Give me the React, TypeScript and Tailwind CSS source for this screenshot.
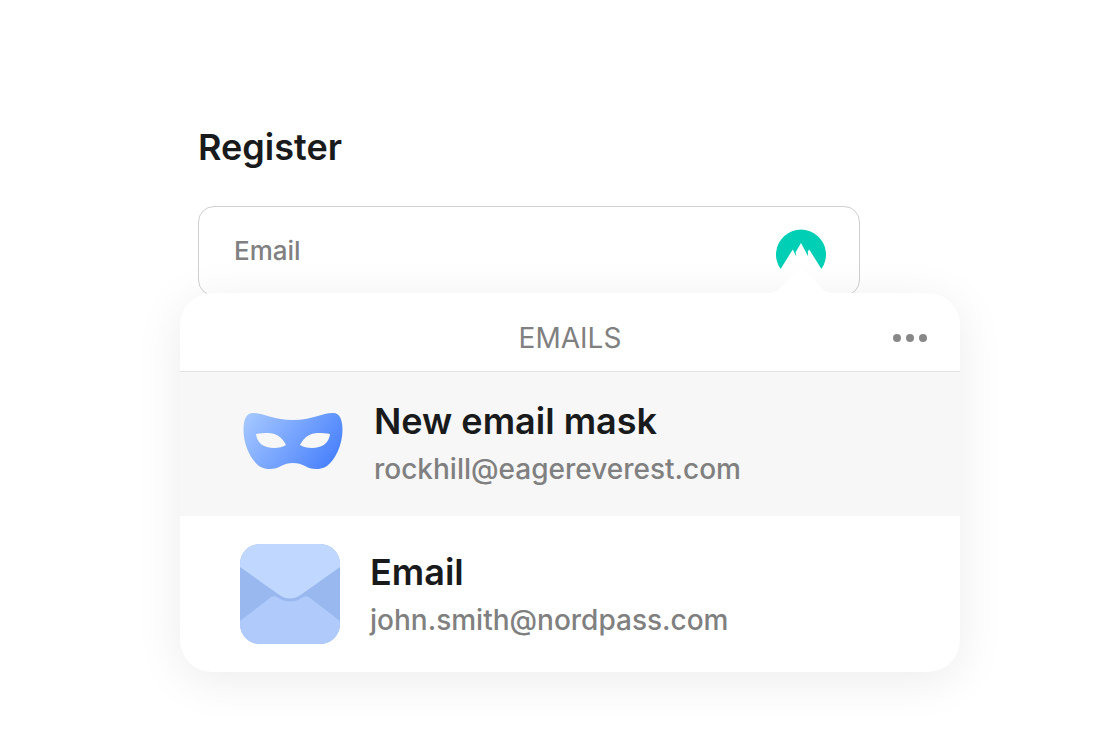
import { useState } from "react";

interface EmailOption {
  id: string;
  title: string;
  address: string;
  icon: React.ReactNode;
}

const NordIcon = () => (
  <svg width="50" height="44" viewBox="0 0 50 44" fill="none" aria-hidden="true">
    <path
      d="M4.6 40A25 25 0 1 1 45.4 40L33.2 20.4L31.8 22.6L32.2 27.6L25 14L19.6 23.2L20.4 27.8L16.800 20.4Z"
      fill="#00CFB6"
    />
  </svg>
);

const MaskIcon = () => (
  <svg width="104" height="60" viewBox="0 2 104 60" fill="none" aria-hidden="true">
    <defs>
      <linearGradient id="mask" x1="6" y1="4" x2="84" y2="62" gradientUnits="userSpaceOnUse">
        <stop stopColor="#A6C8FF" />
        <stop offset="1" stopColor="#4A82FC" />
      </linearGradient>
    </defs>
    <path
      fillRule="evenodd"
      clipRule="evenodd"
      d="M13 2C24 2 34 9 53 9C72 9 82 2 93 2C100 2 102.500 9 102.500 19C102.500 34 95 49 87 55C79 60 70 58 65 55C61 53 58 52 53 52C48 52 45 53 41 55C36 58 27 60 19 55C11 49 3.500 34 3.500 19C3.500 9 6 2 13 2ZM16 23C17 32 24 37 34 37C39 37 43 36 46 34C42 26 36 22 28 22C24 22 20 22 16 23ZM90 23C86 22 82 22 78 22C70 22 64 26 60 34C63 36 67 37 72 37C82 37 89 32 90 23Z"
      fill="url(#mask)"
    />
  </svg>
);

const EnvelopeIcon = () => (
  <svg width="100" height="100" viewBox="0 0 100 100" fill="none" aria-hidden="true">
    <defs>
      <clipPath id="envelope">
        <rect width="100" height="100" rx="20" />
      </clipPath>
    </defs>
    <g clipPath="url(#envelope)">
      <rect width="100" height="100" fill="#98B8EF" />
      <path d="M0 77L30 54Q33 51 37 53C45 59 55 59 63 53Q67 51 70 54L100 77V100H0Z" fill="#B0CBFB" />
      <path d="M0 0H100V23L62 50C54 56 46 56 38 50L0 23Z" fill="#C0D8FF" />
    </g>
  </svg>
);

const options: EmailOption[] = [
  { id: "mask", title: "New email mask", address: "rockhill@eagereverest.com", icon: <MaskIcon /> },
  { id: "email", title: "Email", address: "john.smith@nordpass.com", icon: <EnvelopeIcon /> },
];

export default function App() {
  const [email, setEmail] = useState("");
  const [active, setActive] = useState("mask");

  return (
    <main className="min-h-screen bg-white pt-[125px] pr-[140px] pb-[60px] pl-[180px] font-['Inter',sans-serif]">
      <form className="mr-[100px] ml-[18px]" onSubmit={(e) => e.preventDefault()}>
        <h1 className="text-[36px] leading-[44px] font-semibold text-[#191a1b]">Register</h1>
        <div className="mt-[37px] flex h-[90px] items-center rounded-2xl border border-[#d0d0d0] pr-[33px] pl-[35px]">
          <input
            type="email"
            aria-label="Email"
            placeholder="Email"
            value={email}
            onChange={(e) => setEmail(e.target.value)}
            className="min-w-0 flex-1 bg-transparent text-[26px] leading-[36px] font-[450] text-[#191a1b] outline-none placeholder:text-[#808080]"
          />
          <NordIcon />
        </div>
      </form>

      <section
        aria-label="Emails"
        className="relative -mt-[3px] rounded-[32px] bg-white shadow-[0_8px_48px_rgba(0,0,0,0.08)]"
      >
        <svg
          className="absolute right-[126px] bottom-full"
          width="66"
          height="26"
          viewBox="0 0 66 26"
          fill="#fff"
          aria-hidden="true"
        >
          <path d="M0 26C6 26 9 24 13 20L27 5C31 1 35 1 39 5L53 20C57 24 60 26 66 26Z" />
        </svg>
        <div className="grid h-[79px] grid-cols-[1fr_auto_1fr] items-center border-b border-[#e2e2e2] px-[33px] pt-3">
          <h2 className="col-start-2 text-[28px] leading-[36px] text-[#808080]">EMAILS</h2>
          <button type="button" aria-label="More options" className="flex gap-[5px] justify-self-end">
            <span className="size-2 rounded-full bg-[#888888]" />
            <span className="size-2 rounded-full bg-[#888888]" />
            <span className="size-2 rounded-full bg-[#888888]" />
          </button>
        </div>
        <ul className="overflow-hidden rounded-b-[32px]">
          {options.map((option) => (
            <li key={option.id}>
              <button
                type="button"
                onClick={() => setActive(option.id)}
                className={`flex w-full items-center gap-[30px] px-[60px] text-left ${
                  option.id === active ? "bg-[#f7f7f7] pt-[25px] pb-[27px]" : "py-7"
                }`}
              >
                {option.icon}
                <span className="flex flex-col gap-1">
                  <span className="text-[36px] leading-[48px] font-semibold text-[#191a1b]">{option.title}</span>
                  <span className="text-[28px] leading-[40px] font-[450] text-[#808080]">{option.address}</span>
                </span>
              </button>
            </li>
          ))}
        </ul>
      </section>
    </main>
  );
}
